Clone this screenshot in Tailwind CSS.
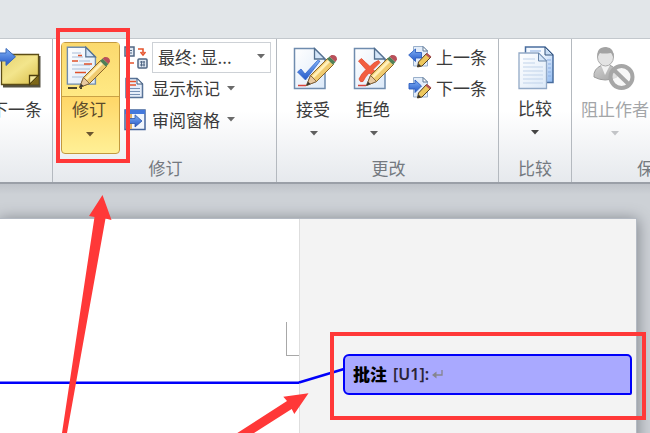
<!DOCTYPE html>
<html lang="zh-CN">
<head>
    <meta charset="UTF-8">
    <meta name="viewport" content="width=device-width, initial-scale=1.0">
    <title>审阅 - 修订</title>
    <script src="https://cdn.jsdelivr.net/npm/@tailwindcss/browser@4"></script>
</head>
<body class="relative w-[650px] h-[433px] overflow-hidden bg-[#cdd1d6] font-['Noto_Sans_CJK_SC',sans-serif] text-[17px] leading-[24px] text-[#3b3b3b]">
    <svg class="absolute w-0 h-0">
        <defs>
            <linearGradient id="blue" x1="0" y1="0" x2="0" y2="1">
                <stop offset="0" stop-color="#7fb0f5"/>
                <stop offset="1" stop-color="#2458c8"/>
            </linearGradient>
            <linearGradient id="paper" x1="0" y1="0" x2="1" y2="1">
                <stop offset="0" stop-color="#ffffff"/>
                <stop offset="1" stop-color="#dce9f8"/>
            </linearGradient>
            <linearGradient id="sheet" x1="0" y1="0" x2="1" y2="1">
                <stop offset=".4" stop-color="#f4f9ff"/>
                <stop offset="1" stop-color="#8db8f0"/>
            </linearGradient>
            <linearGradient id="note" x1="0" y1="0" x2="1" y2="1">
                <stop offset="0" stop-color="#e3cf6c"/>
                <stop offset=".5" stop-color="#f3e58c"/>
                <stop offset="1" stop-color="#d8bd48"/>
            </linearGradient>
            <linearGradient id="grey" x1="0" y1="0" x2="1" y2="1">
                <stop offset="0" stop-color="#d2d2d2"/>
                <stop offset="1" stop-color="#a4a4a4"/>
            </linearGradient>
            <symbol id="page" viewBox="0 0 44 44">
                <path d="M1.500 2.500H21.500L32 13V42.500H1.500Z" fill="url(#paper)" stroke="#6f8cae" stroke-width="1.500"/>
                <path d="M21.500 2.500V13H32Z" fill="#d4e5f8" stroke="#54708f" stroke-width="1.300"/>
            </symbol>
            <symbol id="pencil" viewBox="0 0 44 44">
                <path d="M13.500 39.500L17.500 29.500L34.500 12.500L40.500 18.500L23.500 35.500Z" fill="#f0cb70" stroke="#8a6428" stroke-width="1"/>
                <path d="M19 30L35.500 13.500L37.500 15.500L21 32Z" fill="#fff0b8"/>
                <path d="M13.500 39.500L17.500 29.500L23.500 35.500Z" fill="#e8c9a0" stroke="#6e5434" stroke-width=".8"/>
                <path d="M13.500 39.500L15 35.800L17.500 38Z" fill="#333"/>
                <path d="M34 13L36.500 10.500L42.500 16L40 18.700Z" fill="#4f8058"/>
                <path d="M36.500 10.500L38.500 9Q44 8.500 44 13.500L42.500 16Z" fill="#b9505a"/>
            </symbol>
            <symbol id="minidoc" viewBox="0 0 24 24">
                <path d="M5.500 1.500H15L19.500 6V21H5.500Z" fill="#e3edf9" stroke="#9ab0cb"/>
                <path d="M15 1.500V6H19.500Z" fill="#fff" stroke="#5e7896"/>
                <path d="M9.500 22L10.500 17L18.500 8.500L23 12L14 21Z" fill="#edc75c" stroke="#553f1c" stroke-width="1"/>
                <path d="M9.500 22L10.500 18.500L13 21Z" fill="#333"/>
                <path d="M17.500 9.700L19 8L23.300 11.500L21.800 13.200Z" fill="#b2555a"/>
            </symbol>
        </defs>
    </svg>

    <!-- 标签栏 -->
    <div class="h-[38px] bg-[#e2e6e9]"></div>

    <!-- 功能区 -->
    <div class="flex w-[650px] h-[146px] overflow-hidden border-t border-t-[#c3c8cd] border-b-2 border-b-[#9a9fa7] bg-linear-to-b from-white from-50% to-[#e6e9ed]">

        <!-- 批注 -->
        <div class="w-[53px] shrink-0 border-r border-[#b4b9bf] overflow-hidden">
            <svg class="mt-[8px] w-[44px] h-[44px]" viewBox="0 0 44 44">
                <path d="M3 9H40.500V40.500H3Z" fill="#2b2714" opacity=".8"/>
                <path d="M-2 7.500H38.500V37.500H1.500V7.500Z" fill="url(#note)" stroke="#5c4d16" stroke-width="1.300"/>
                <path d="M29.500 37.500V28.500H38.500Z" fill="#f4e89c" stroke="#4d3e0c" stroke-width="1.300"/>
                <path d="M30 37.500L38.500 29V37.500Z" fill="#7d6718"/>
                <path d="M-2 6H6V1.500L15.500 9.800L6 18.500V14H-2Z" fill="url(#blue)" stroke="#3a68b8"/>
            </svg>
            <div class="-ml-[9px] mt-[6px] whitespace-nowrap">下一条</div>
        </div>

        <!-- 修订 -->
        <div class="w-[224px] shrink-0 border-r border-[#b4b9bf] flex flex-col">
            <div class="flex h-[117px] pt-[3px] pl-[8px]">
                <div class="w-[59px] h-[112px] shrink-0 rounded-[4px] border-[1.5px] border-[#c2993f] bg-linear-to-b from-[#fbdc74] via-[#ffd768] to-[#fff096]">
                    <div class="h-[54px] w-full border-b border-[#c9a246] bg-linear-to-b from-[#fbd96e] to-[#ffe984] pl-[4px] pt-[2px]">
                        <svg class="w-[46px] h-[46px]" viewBox="0 0 46 46">
                            <use href="#page" width="44" height="44" transform="scale(.92)"/>
                            <path d="M6 8H15M6 12H17M13 16H24M6 20H24M6 24H24M6 32H20" stroke="#a9bdd8"/>
                            <path d="M12 10.500H16M6 16H12M18 19H26M9 27.500H20" stroke="#e0512a" stroke-width="1.600"/>
                            <path d="M2 43H11M14 43H16" stroke="#111" stroke-width="1.500"/>
                            <use href="#pencil" width="44" height="44" y="3"/>
                        </svg>
                    </div>
                    <div class="w-[54px] flex flex-col items-center">
                        <div class="text-[#5b4a2a]">修订</div>
                        <svg class="mt-[11px] ml-[1px] w-[8px] h-[5px]" viewBox="0 0 8 5"><path d="M0 0H8L4 4.500Z" fill="#6b5630"/></svg>
                    </div>
                </div>
                <div class="ml-[4px] flex flex-col">
                    <div class="flex h-[31px] items-center">
                        <svg class="w-[24px] h-[24px]" viewBox="0 0 24 24">
                            <rect x="1" y="1" width="9" height="9" fill="#dfe8f2" stroke="#516784" stroke-width="1.500"/>
                            <path d="M3.500 4.500H8M3.500 7H8M5.500 3V8" stroke="#516784"/>
                            <path d="M14 3H19V7M16.500 6L19 9L21.500 6" fill="none" stroke="#e5532c" stroke-width="1.600"/>
                            <path d="M4 13V17H10" fill="none" stroke="#e5532c" stroke-width="1.600"/>
                            <rect x="14" y="13" width="9" height="9" rx="1" fill="#dfe8f2" stroke="#516784" stroke-width="1.500"/>
                            <path d="M16 16H21M16 19H21M17.500 15V20.500M20 15V20.500" stroke="#516784"/>
                        </svg>
                        <div class="ml-[4px] w-[119px] h-[31px] border border-[#cdd1d6] bg-white flex items-center pl-[5px] pr-[5px] pb-[2px]">
                            <span class="flex-1 whitespace-nowrap">最终: 显...</span>
                            <svg class="w-[8px] h-[5px]" viewBox="0 0 8 5"><path d="M0 0H8L4 4.500Z" fill="#6a6a6a"/></svg>
                        </div>
                    </div>
                    <div class="flex h-[31px] items-center pb-[1px]">
                        <svg class="w-[24px] h-[24px]" viewBox="0 0 24 24">
                            <path d="M2 2.500H13L18.500 8V21.500H2Z" fill="#e6eefa" stroke="#587398" stroke-width="1.500"/>
                            <path d="M13 2.500V8H18.500Z" fill="#fff" stroke="#3f587a"/>
                            <path d="M5 5.500H12M5 9H12" stroke="#e5532c" stroke-width="1.600"/>
                            <path d="M5 12.500H16M5 15.500H16M5 18.500H16" stroke="#7690b4"/>
                        </svg>
                        <span class="ml-[4px]">显示标记</span>
                        <svg class="ml-[7px] w-[8px] h-[5px]" viewBox="0 0 8 5"><path d="M0 0H8L4 4.500Z" fill="#6a6a6a"/></svg>
                    </div>
                    <div class="flex h-[32px] items-center pb-[1px]">
                        <svg class="w-[24px] h-[24px]" viewBox="0 0 24 24">
                            <rect x="1" y="2" width="20" height="19.500" fill="#f1f6fd" stroke="#44659c" stroke-width="1.500"/>
                            <rect x="1" y="2" width="20" height="4" fill="#4378dc"/>
                            <rect x="2" y="6" width="6" height="15" fill="#dfb36a"/>
                            <path d="M4 10.500H11V6.800L18 13L11 19V15.500H4Z" fill="url(#blue)" stroke="#2c55a8" stroke-width=".8"/>
                        </svg>
                        <span class="ml-[4px]">审阅窗格</span>
                        <svg class="ml-[7px] w-[8px] h-[5px]" viewBox="0 0 8 5"><path d="M0 0H8L4 4.500Z" fill="#6a6a6a"/></svg>
                    </div>
                </div>
            </div>
            <div class="text-center pl-[2px] text-[#74797f]">修订</div>
        </div>

        <!-- 更改 -->
        <div class="w-[222px] shrink-0 border-r border-[#b4b9bf] flex flex-col">
            <div class="flex h-[117px] pt-[3px] pl-[6px]">
                <div class="w-[60px] flex flex-col items-center">
                    <svg class="mt-[4px] ml-[3px] w-[44px] h-[44px]" viewBox="0 0 44 44">
                        <use href="#page" width="44" height="44"/>
                        <path d="M4.500 26L8 23L12 28L24.500 14.500L27 15L12.500 34Z" fill="url(#blue)" stroke="#3164cc" stroke-width=".8"/>
                        <path d="M5 39.500H13" stroke="#d8433a" stroke-width="1.500"/>
                        <use href="#pencil" width="44" height="44"/>
                    </svg>
                    <div class="mt-[7px]">接受</div>
                    <svg class="mt-[10px] ml-[2px] w-[8px] h-[5px]" viewBox="0 0 8 5"><path d="M0 0H8L4 4.500Z" fill="#5f5f5f"/></svg>
                </div>
                <div class="w-[60px] flex flex-col items-center">
                    <svg class="mt-[4px] ml-[3px] w-[44px] h-[44px]" viewBox="0 0 44 44">
                        <use href="#page" width="44" height="44"/>
                        <path d="M5.500 15L8.500 12.500Q12 16 17 20.500Q21 16 25.500 14.500L27 16.500L20 23.500L26 29L23 31.500L16 27Q12 31 10 35.500Q7 37 6 33Q8 28 13 23.500Z" fill="#f25f40" stroke="#e0492f" stroke-width=".8"/>
                        <path d="M5 39.500H13" stroke="#d8433a" stroke-width="1.500"/>
                        <use href="#pencil" width="44" height="44"/>
                    </svg>
                    <div class="mt-[7px]">拒绝</div>
                    <svg class="mt-[10px] ml-[2px] w-[8px] h-[5px]" viewBox="0 0 8 5"><path d="M0 0H8L4 4.500Z" fill="#5f5f5f"/></svg>
                </div>
                <div class="ml-[5px] -mt-[1px]">
                    <div class="flex h-[31px] items-center gap-[4px]">
                        <svg class="w-[24px] h-[24px]" viewBox="0 0 24 24">
                            <use href="#minidoc" width="24" height="24"/>
                            <path d="M.700 10L7.500 4V7.500H13.500V13H7.500V16.500Z" fill="url(#blue)" stroke="#2c5fc0" stroke-width=".9"/>
                        </svg>
                        <span>上一条</span>
                    </div>
                    <div class="flex h-[31px] items-center gap-[4px]">
                        <svg class="w-[24px] h-[24px]" viewBox="0 0 24 24">
                            <use href="#minidoc" width="24" height="24"/>
                            <path d="M13.500 10L7 4V7.500H1V13H7V16.500Z" fill="url(#blue)" stroke="#2c5fc0" stroke-width=".9"/>
                        </svg>
                        <span>下一条</span>
                    </div>
                </div>
            </div>
            <div class="text-center pl-[2px] text-[#74797f]">更改</div>
        </div>

        <!-- 比较 -->
        <div class="w-[73px] shrink-0 border-r border-[#b4b9bf] flex flex-col">
            <div class="flex h-[117px] pt-[3px] flex-col items-center">
                <svg class="mt-[3px] ml-[2px] w-[38px] h-[46px]" viewBox="0 0 38 46">
                    <path d="M8.500 2H28L36 10V37.500H8.500Z" fill="url(#sheet)" stroke="#496d9e" stroke-width="1.500"/>
                    <path d="M28 2V10H36Z" fill="#c8ddf5" stroke="#35547c"/>
                    <path d="M13 6H24M30 15H34M31 19H34M31 23H34M31 27H34M31 31H34" stroke="#8bade0"/>
                    <path d="M2 8H21.500L29.500 16V43.500H2Z" fill="url(#paper)" stroke="#92a9c6" stroke-width="1.300"/>
                    <path d="M21.500 8V16H29.500Z" fill="#d6e7fa" stroke="#6885a9"/>
                    <path d="M6 14H18M6 18H18M6 22H26M6 26H26M6 30H26M6 34H26M6 38H26" stroke="#c1d3ea"/>
                </svg>
                <div class="mt-[5px]">比较</div>
                <svg class="mt-[10px] w-[8px] h-[5px]" viewBox="0 0 8 5"><path d="M0 0H8L4 4.500Z" fill="#444"/></svg>
            </div>
            <div class="text-center text-[#74797f]">比较</div>
        </div>

        <!-- 保护 -->
        <div class="w-[78px] shrink-0 flex flex-col overflow-hidden">
            <div class="h-[117px] pt-[3px] pl-[9px] text-[#a3a5a8]">
                <svg class="ml-[12px] mt-[3px] w-[44px] h-[46px]" viewBox="0 0 44 46">
                    <path d="M1 32Q0 24 9 20H16Q24 22 24 32Q12 38 1 32Z" fill="url(#grey)" stroke="#9b9b9b"/>
                    <path d="M8 20L12 30L17 20Z" fill="#f3f3f3"/>
                    <ellipse cx="12.500" cy="12" rx="8" ry="9" fill="#e3e3e3" stroke="#aaa"/>
                    <path d="M4.500 13Q3 2 13 2Q22 3 20.500 13Q19 9 18 8Q10 9 7 8Q5 10 4.500 13Z" fill="#a3a3a3"/>
                    <circle cx="28.500" cy="32" r="11" fill="#f3f3f3" fill-opacity=".7" stroke="#a6a6a6" stroke-width="4"/>
                    <path d="M21 25L36 39.500" stroke="#a6a6a6" stroke-width="4"/>
                </svg>
                <div class="mt-[6px] whitespace-nowrap">阻止作者</div>
                <svg class="ml-[30px] mt-[10px] w-[8px] h-[5px]" viewBox="0 0 8 5"><path d="M0 0H8L4 4.500Z" fill="#c2c4c7"/></svg>
            </div>
            <div class="pl-[65px] whitespace-nowrap text-[#74797f]">保护</div>
        </div>
    </div>

    <!-- 文档区 -->
    <div class="h-[34px] bg-linear-to-b from-[#bfc3c9] via-[#cdd1d6] via-30% to-[#cdd1d6]"></div>
    <div class="relative flex w-[637px] h-[230px] border-t border-r border-[#b3b9c2] bg-white shadow-[0_2px_14px_1px_#80858c]">
        <div class="w-[299px] shrink-0 flex justify-end">
            <div class="mt-[103px] w-[13px] h-[34px] border-l border-b border-[#a8a8a8]"></div>
        </div>
        <div class="flex-1 border-l border-[#dedede] bg-[#f3f3f3] pl-[43px] pt-[135px]">
            <div class="w-[289px] h-[41px] rounded-l-[6px] rounded-tr-[5px] rounded-br-[2px] border-[2.5px] border-[#0000fa] bg-[#a9a9ff] flex items-center pl-[8px] pb-[1px] text-black">
                <b class="font-black">批注</b>
                <span class="ml-[6px] font-['Noto_Sans'] font-semibold text-[16px] text-[#2c2438]">[U1]:</span>
                <svg class="ml-[3px] w-[11px] h-[11px]" viewBox="0 0 11 11"><path d="M10 1V6H3" fill="none" stroke="#85858f" stroke-width="1.300"/><path d="M0 6L4.500 2.500V9.500Z" fill="#85858f"/></svg>
            </div>
        </div>
    </div>

    <!-- 批注连线、红框和箭头 -->
    <svg class="absolute left-0 top-0 w-[650px] h-[433px]" viewBox="0 0 650 433" fill="none">
        <path d="M0 382.700H299" stroke="#0000fa" stroke-width="2.500"/>
        <path d="M299 382.500L344 369" stroke="#0000fa" stroke-width="2.500"/>
        <rect x="58" y="30" width="70" height="131" stroke="#ff3838" stroke-width="4"/>
        <rect x="332" y="334" width="312" height="84" stroke="#ff3838" stroke-width="4"/>
        <path d="M102.500 195L111.500 220L105.500 218.500L67 433H62L94.500 217L89 216Z" fill="#ff3838"/>
        <path d="M308.500 393.300L283.300 396.700L287 401L237.300 433H254L291.700 409L294.300 414Z" fill="#ff3838"/>
    </svg>
</body>
</html>
